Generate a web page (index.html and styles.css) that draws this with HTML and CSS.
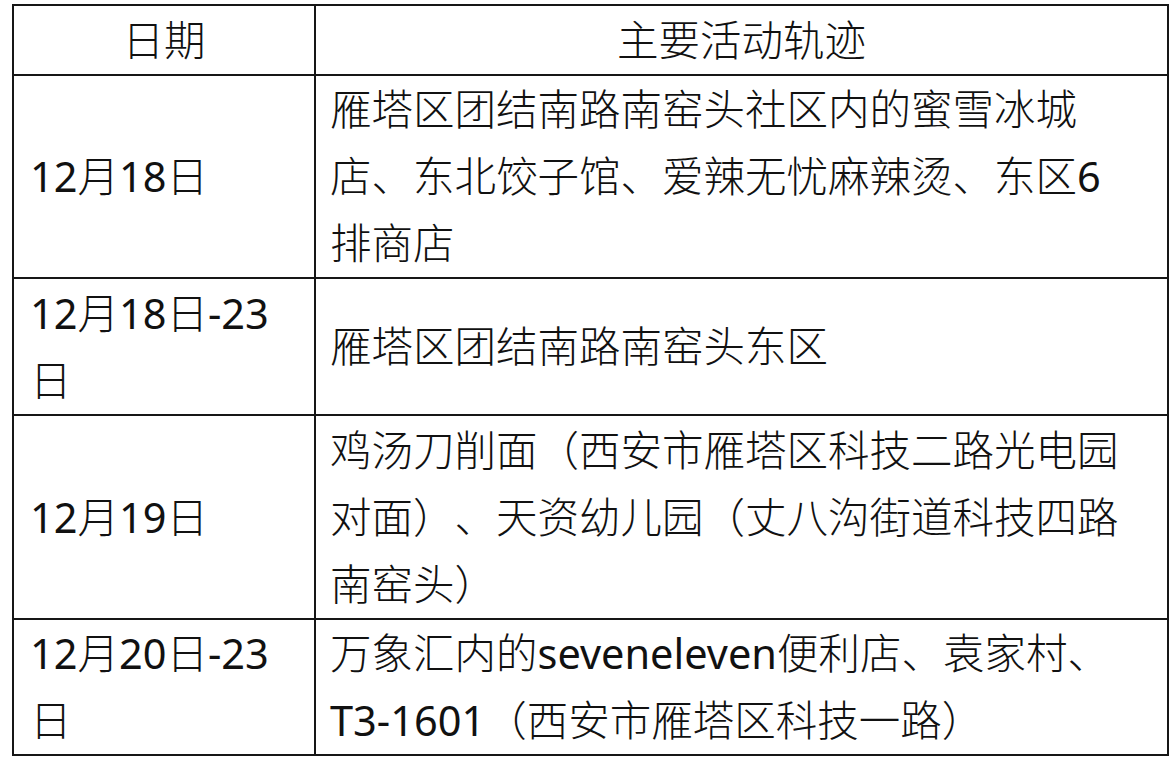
FILE: index.html
```html
<!DOCTYPE html>
<html lang="zh-CN">
<head>
<meta charset="utf-8">
<title>主要活动轨迹</title>
<link rel="stylesheet" href="styles.css">
</head>
<body>
<table class="trace">
  <colgroup>
    <col class="c-date">
    <col class="c-place">
  </colgroup>
  <thead>
    <tr class="head">
      <th>日期</th>
      <th>主要活动轨迹</th>
    </tr>
  </thead>
  <tbody>
    <tr class="r1">
      <td class="date"><span class="lat">12</span>月<span class="lat">18</span>日</td>
      <td class="place">雁塔区团结南路南窑头社区内的蜜雪冰城<br>店、东北饺子馆、爱辣无忧麻辣烫、东区<span class="lat">6</span><br>排商店</td>
    </tr>
    <tr class="r2">
      <td class="date"><span class="lat">12</span>月<span class="lat">18</span>日<span class="lat">-23</span><br>日</td>
      <td class="place">雁塔区团结南路南窑头东区</td>
    </tr>
    <tr class="r3">
      <td class="date"><span class="lat">12</span>月<span class="lat">19</span>日</td>
      <td class="place">鸡汤刀削面（西安市雁塔区科技二路光电园<br>对面）、天资幼儿园（丈八沟街道科技四路<br>南窑头）</td>
    </tr>
    <tr class="r4">
      <td class="date"><span class="lat">12</span>月<span class="lat">20</span>日<span class="lat">-23</span><br>日</td>
      <td class="place">万象汇内的<span class="lat">seveneleven</span>便利店、袁家村、<br><span class="lat">T3-1601</span>（西安市雁塔区科技一路）</td>
    </tr>
  </tbody>
</table>
</body>
</html>
```

FILE: styles.css
```css
html, body {
  margin: 0;
  padding: 0;
  background: #ffffff;
}

body {
  padding: 4px 0 0 12px;
  font-family: "Noto Sans", "Noto Sans CJK SC", sans-serif;
  color: #111111;
}

.trace {
  border-collapse: collapse;
  table-layout: fixed;
  width: 1157px;
  font-size: 41.5px;
  line-height: 67px;
  text-spacing-trim: space-all;
}

.c-date {
  width: 302px;
}

.trace th,
.trace td {
  border: 2px solid #161616;
  padding: 0;
  vertical-align: middle;
  font-weight: 300;
  text-align: left;
}

.trace th {
  text-align: center;
  height: 68px;
}

.trace td.date {
  padding-left: 16px;
}

.trace td.place {
  padding-left: 14px;
}

.lat {
  font-weight: 400;
}

.r1 td { height: 201px; }
.r2 td { height: 135px; }
.r3 td { height: 202px; }
.r4 td { height: 134px; }
```
